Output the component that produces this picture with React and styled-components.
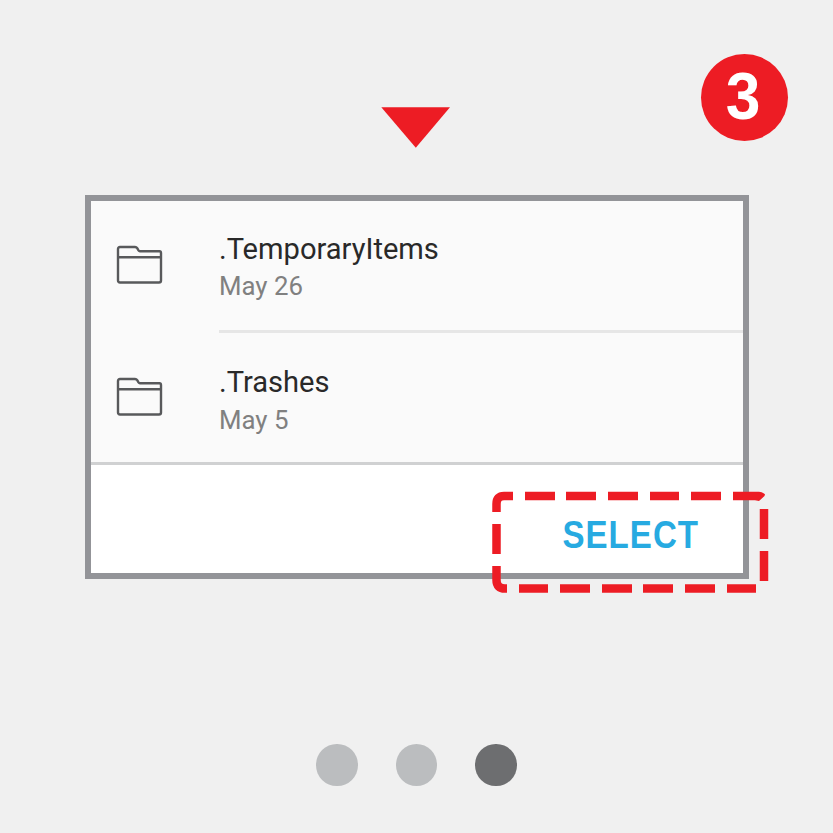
import React from 'react';
import styled, { createGlobalStyle } from 'styled-components';

const GlobalStyle = createGlobalStyle`
  * { box-sizing: border-box; }
  body { margin: 0; background: #f0f0f0; }
`;

const Page = styled.main`
  width: 833px;
  height: 833px;
  display: flex;
  flex-direction: column;
  background: #f0f0f0;
  overflow: hidden;
`;

const Header = styled.header`
  height: 195px;
  display: grid;
  grid-template-columns: 381px 69px 1fr;
  align-items: start;
  padding-right: 45px;
`;

const Arrow = styled.svg`
  grid-column: 2;
  width: 69px;
  height: 41px;
  margin-top: 107px;
  display: block;
`;

const StepBadge = styled.div`
  justify-self: end;
  width: 87px;
  height: 87px;
  margin-top: 54px;
  border-radius: 50%;
  background: #ed1c24;
  color: #fff;
  font: 700 67px/87px "Liberation Sans", Arial, sans-serif;
  text-align: center;
  padding-right: 3px;
`;

const Digit = styled.span`
  display: block;
  transform: translateY(-2px) scaleX(0.93);
`;

const Panel = styled.section`
  position: relative;
  width: 664px;
  height: 384px;
  margin-left: 85px;
  display: flex;
  flex-direction: column;
  border: 6px solid #939498;
  background: #fff;
`;

const FolderList = styled.ul`
  height: 264px;
  margin: 0;
  padding: 0;
  list-style: none;
  background: #fafafa;
  border-bottom: 3px solid #d0d1d2;
`;

const FolderRow = styled.li`
  height: ${(p) => (p.$divided ? 132 : 129)}px;
  display: grid;
  grid-template-columns: 128px 1fr;
`;

const FolderIcon = styled.svg`
  width: 48px;
  height: 40px;
  margin: 44px 0 0 25px;
  fill: none;
  stroke: #58595b;
  stroke-width: 2.4;
  stroke-linejoin: round;
`;

const Details = styled.div`
  padding-top: ${(p) => (p.$divided ? 30 : 31)}px;
  border-bottom: ${(p) => (p.$divided ? '3px solid #e6e6e6' : 'none')};
  font-family: Roboto, sans-serif;
`;

const Name = styled.div`
  font-size: 29.1px;
  line-height: 37px;
  color: #292929;
`;

const DateText = styled.div`
  font-size: 25.8px;
  line-height: ${(p) => (p.$divided ? 37 : 38)}px;
  color: #808080;
`;

const Actions = styled.footer`
  flex: 1;
  display: flex;
  justify-content: flex-end;
  align-items: flex-start;
  padding: 48px 44px 0 0;
`;

const SelectButton = styled.button`
  border: 0;
  padding: 0;
  background: none;
  color: #27aae1;
  font: 700 38px/44px "Liberation Sans", Arial, sans-serif;
  letter-spacing: 1.2px;
  transform: scaleX(0.87);
  transform-origin: right center;
`;

const Highlight = styled.svg`
  position: absolute;
  left: 400px;
  top: 286px;
  width: 284px;
  height: 112px;
  fill: none;
  stroke: #ed1c24;
  stroke-width: 8.5;
  pointer-events: none;
`;

const Dots = styled.nav`
  display: flex;
  justify-content: center;
  gap: 38px;
  margin-top: 165px;
`;

const Dot = styled.span`
  width: 41.5px;
  height: 41.5px;
  border-radius: 50%;
  background: ${(p) => (p.$active ? '#6d6e70' : '#bbbdbf')};
`;

const folders = [
  { name: '.TemporaryItems', date: 'May 26' },
  { name: '.Trashes', date: 'May 5' },
];

export default function App() {
  return (
    <Page>
      <GlobalStyle />
      <Header>
        <Arrow viewBox="0 0 69 41">
          <path d="M.3 .3H69L34.8 40.8Z" fill="#ed1c24" />
        </Arrow>
        <StepBadge><Digit>3</Digit></StepBadge>
      </Header>
      <Panel>
        <FolderList>
          {folders.map((folder, i) => {
            const divided = i < folders.length - 1;
            return (
              <FolderRow key={folder.name} $divided={divided}>
                <FolderIcon viewBox="0 0 48 40">
                  <path d="M2 35.5V4Q2 2 4 2H19Q20.5 2 21.2 3.2L22.5 5.4Q23 6.2 24 6.2H43.5Q45 6.2 45 8V35.5Q45 37.5 43 37.5H4Q2 37.5 2 35.5Z" />
                  <path d="M2 12.2H45" />
                </FolderIcon>
                <Details $divided={divided}>
                  <Name>{folder.name}</Name>
                  <DateText $divided={divided}>{folder.date}</DateText>
                </Details>
              </FolderRow>
            );
          })}
        </FolderList>
        <Actions>
          <SelectButton>SELECT</SelectButton>
        </Actions>
        <Highlight viewBox="491 487 284 112">
          <path d="M513 496H504Q496.5 496 496.5 504V512M496.5 524V554M496.5 566V580Q496.5 588.5 505 588.5H507" />
          <path d="M525 496H555M566 496H596M608 496H638M650 496H679M691 496H721" />
          <path d="M519 588.5H548M560 588.5H590M602 588.5H632M643 588.5H673M685 588.5H715M727 588.5H756" />
          <path d="M764 509V539M764 551V581" />
          <path d="M733 491.8H759Q762.5 492 765 494.3L764.5 496L759 501L755 500.2H733Z" fill="#ed1c24" stroke="none" />
        </Highlight>
      </Panel>
      <Dots>
        <Dot />
        <Dot />
        <Dot $active />
      </Dots>
    </Page>
  );
}
